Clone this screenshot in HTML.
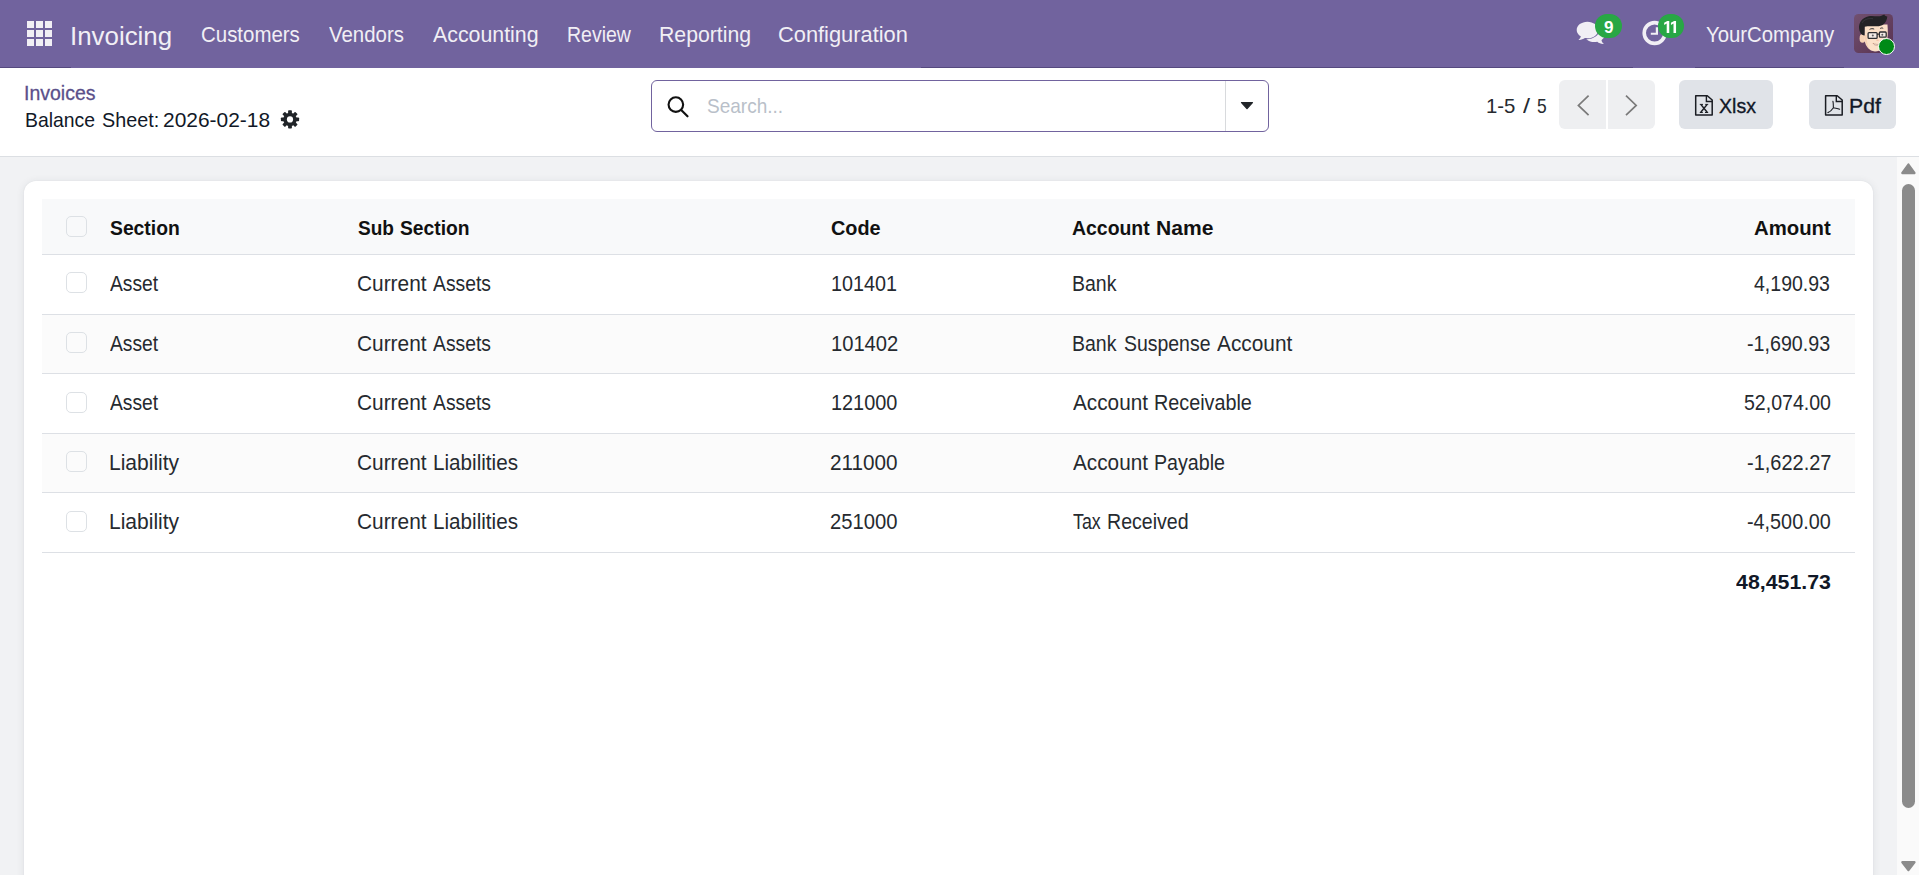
<!DOCTYPE html>
<html lang="en">
<head>
<meta charset="utf-8">
<title>Odoo - Balance Sheet</title>
<style>
html,body{margin:0;padding:0}
html{overflow:hidden}
body{width:1919px;height:875px;overflow:hidden;background:#ffffff}
#root{position:relative;width:1919px;height:875px;overflow:hidden;background:#ffffff;font-family:"Liberation Sans",sans-serif;-webkit-font-smoothing:antialiased}
.a{position:absolute}
.t{position:absolute;white-space:nowrap;transform-origin:0 0}
svg{position:absolute;overflow:visible}
#nav{left:0;top:0;width:1919px;height:68px;background:#71639e}
#navline1{left:0;top:67px;width:71px;height:1px;background:#55497f}
#navline2{left:921px;top:67px;width:712px;height:1px;background:#55497f}
#navline3{left:1695px;top:67px;width:149px;height:1px;background:#55497f}
.sq{position:absolute;width:7.6px;height:7.1px;background:#f1eff5}
.badge{position:absolute;top:13.6px;height:24.3px;border-radius:12.2px;background:#28a745}
#cpline{left:0;top:156px;width:1919px;height:1px;background:#dcdfe3}
#content{left:0;top:157px;width:1897px;height:718px;background:#f1f2f4}
#sbtrack{left:1897px;top:157px;width:22px;height:718px;background:#fafafa}
#sbthumb{left:1902px;top:184px;width:13px;height:624px;border-radius:6.5px;background:#8b8b8b}
#card{left:24px;top:181px;width:1849px;height:740px;background:#ffffff;border-radius:12px;box-shadow:0 1px 9px rgba(30,40,60,.09),0 0 2px rgba(30,40,60,.06)}
#thead{left:42px;top:199px;width:1813px;height:55.5px;background:#f8f9fa}
.hl{position:absolute;left:42px;width:1813px;height:1px;background:#dde0e5}
.stripe{position:absolute;left:42px;width:1813px;background:#fbfbfb}
.cb{position:absolute;left:66.2px;width:18.9px;height:19.1px;border:1px solid #dde1e5;border-radius:5px;background:transparent}
#search{left:651px;top:80px;width:616px;height:50px;border:1px solid #71639e;border-radius:6px;background:#ffffff}
#sdiv{left:1225px;top:81px;width:1px;height:50px;background:#d8dadd}
.pg{position:absolute;top:80px;height:49px;background:#eeeff1}
.btn{position:absolute;top:80px;height:49px;background:#e0e3e8;border-radius:6px}
</style>
</head>
<body>
<div id="root">
<!-- NAVBAR -->
<div class="a" id="nav"></div>
<div class="a" id="navline1"></div>
<div class="a" id="navline2"></div>
<div class="a" id="navline3"></div>
<div class="sq" style="left:26.7px;top:20.9px"></div><div class="sq" style="left:35.8px;top:20.9px"></div><div class="sq" style="left:44.85px;top:20.9px"></div>
<div class="sq" style="left:26.7px;top:29.9px"></div><div class="sq" style="left:35.8px;top:29.9px"></div><div class="sq" style="left:44.85px;top:29.9px"></div>
<div class="sq" style="left:26.7px;top:38.9px"></div><div class="sq" style="left:35.8px;top:38.9px"></div><div class="sq" style="left:44.85px;top:38.9px"></div>

<!-- comments icon -->
<svg style="left:1572px;top:14px" width="40" height="36" viewBox="1572 14 40 36">
 <path fill="#f1eff5" d="M1594.2 25.6 C1599.8 25.6 1604.3 29.1 1604.3 33.4 C1604.7 35.4 1604.5 37 1603.4 38.3 C1602.7 39 1602 39.6 1601.5 40.2 C1601.7 41.6 1602.6 42.9 1604 43.9 C1601.4 44.1 1599 43.4 1597.3 41.8 C1596.3 42 1595.3 42.1 1594.2 42.1 C1588.6 42.1 1584.1 38.2 1584.1 33.9 C1584.1 29.6 1588.6 25.6 1594.2 25.6 Z"/>
 <path fill="#f1eff5" stroke="#71639e" stroke-width="2.1" paint-order="stroke" d="M1587.4 21.8 C1581.5 21.8 1576.7 25.4 1576.7 29.9 C1576.7 32.5 1578.3 34.8 1580.8 36.3 C1580.6 37.7 1579.8 38.9 1578.5 39.9 C1581 40 1583.2 39.4 1584.9 38.1 C1585.7 38.2 1586.5 38.2 1587.4 38.2 C1593.3 38.2 1598.1 34.5 1598.1 29.9 C1598.1 25.4 1593.3 21.8 1587.4 21.8 Z"/>
</svg>
<div class="badge" style="left:1595px;width:27px"></div>
<!-- clock icon -->
<svg style="left:1642px;top:20px" width="26" height="26" viewBox="0 0 26 26">
 <circle cx="12.6" cy="13" r="10.4" fill="none" stroke="#f1eff5" stroke-width="3.6"/>
 <path d="M13.8 7.3 h2.2 v7.5 h-7.2 v-2.1 h5 z" fill="#f1eff5"/>
</svg>
<div class="badge" style="left:1657.5px;width:26.7px"></div>
<svg style="left:1657px;top:13px" width="28" height="26" viewBox="1657 13 28 26"><path fill="#ffffff" d="M1669.25 21 L1667.30 21 L1664.15 22.75 L1664.15 24.9 L1666.70 23.6 L1666.70 32.9 L1669.25 32.9 Z M1676.05 21 L1674.10 21 L1670.95 22.75 L1670.95 24.9 L1673.50 23.6 L1673.50 32.9 L1676.05 32.9 Z"/></svg>

<!-- avatar -->
<svg style="left:1854px;top:14px" width="39" height="39" viewBox="0 0 39 39">
 <defs>
  <linearGradient id="avbg" x1="0" y1="0" x2="1" y2="1"><stop offset="0" stop-color="#71506f"/><stop offset="1" stop-color="#593251"/></linearGradient>
  <clipPath id="avclip"><rect x="0" y="0" width="39" height="39" rx="4.5" ry="4.5"/></clipPath>
 </defs>
 <g clip-path="url(#avclip)">
  <rect x="0" y="0" width="39" height="39" fill="url(#avbg)"/>
  <!-- ear -->
  <ellipse cx="8.5" cy="24.4" rx="2.9" ry="4.4" fill="#f6d2b5"/>
  <!-- face -->
  <path d="M10.4 10.5 L33.5 10.5 C34 17 34 23.5 32.6 28.2 C30.8 33.8 26.2 37.6 20.8 37.4 C15.2 37.1 11.6 32.4 10.4 26 Z" fill="#fbe0c8"/>
  <path d="M10.4 21 C11 27 12 31.5 15.5 35 C13 31 12.6 26 12.6 21 Z" fill="#f3c9aa" opacity=".7"/>
  <!-- hair -->
  <path d="M5.1 14.4 C4.5 9 8 3.6 14.7 2.2 C19 1.4 24 3 27.5 1.7 C28.6 1.2 29.6 .7 30.3 .4 C30.6 1.4 31.6 2.1 33.3 2.4 C33.1 5.6 31.7 8.5 29.6 10.2 C27.6 11.8 25.6 12.2 23 12.3 C18.5 12.5 14 12.1 10.7 12.7 L10.6 21.4 C8.6 21.2 7.2 20.4 6.5 19 C5.6 17.5 5.2 15.9 5.1 14.4 Z" fill="#232326"/>
  <path d="M8 9 C10 5.5 14 4.2 19 4.6" stroke="#3c3c40" stroke-width="1.1" fill="none" opacity=".7"/>
  <!-- glasses -->
  <rect x="14.1" y="18.7" width="9" height="5.6" rx=".9" fill="#f3ebe6" stroke="#2d2d30" stroke-width="1.3"/>
  <rect x="25.4" y="18" width="6.8" height="5.2" rx=".9" fill="#f3ebe6" stroke="#2d2d30" stroke-width="1.3"/>
  <path d="M23.1 20.4 L25.4 20" stroke="#2d2d30" stroke-width="1.2" fill="none"/>
  <circle cx="18.8" cy="21.6" r="1" fill="#5a5a5e"/><circle cx="28.3" cy="20.8" r="1" fill="#5a5a5e"/>
  <!-- brows -->
  <path d="M15.6 15.4 C17 14.5 18.8 14.5 20.2 15.1" stroke="#2d2d30" stroke-width="1" fill="none"/>
  <path d="M26.2 14.5 C27.1 13.8 28.3 13.8 29.2 14.4" stroke="#2d2d30" stroke-width="1" fill="none"/>
  <!-- nose -->
  <ellipse cx="23.6" cy="26.3" rx="1.4" ry=".8" fill="#efb9a0" opacity=".8"/>
  <!-- mouth -->
  <path d="M19 29.3 C21.2 30.4 23.4 30.6 25 30.2 C23.8 31.8 20.8 31.8 19 29.3 Z" fill="#ffffff" stroke="#a8705c" stroke-width=".5"/>
 </g>
</svg>
<div class="a" style="left:1877.8px;top:37.6px;width:15.2px;height:15.2px;border-radius:50%;background:#008a17;border:1.6px solid #ffffff"></div>

<!-- CONTROL PANEL -->
<svg style="left:280px;top:109px" width="20" height="21" viewBox="-10 -10.4 20 21">
 <g fill="#212529">
  <circle r="6.7"/>
  <rect x="-1.9" y="-9.1" width="3.8" height="18.2" rx=".8"/>
  <rect x="-1.9" y="-9.1" width="3.8" height="18.2" rx=".8" transform="rotate(45)"/>
  <rect x="-1.9" y="-9.1" width="3.8" height="18.2" rx=".8" transform="rotate(90)"/>
  <rect x="-1.9" y="-9.1" width="3.8" height="18.2" rx=".8" transform="rotate(135)"/>
 </g>
 <circle r="3.1" fill="#ffffff"/>
</svg>
<div class="a" id="search"></div>
<div class="a" id="sdiv"></div>
<svg style="left:665px;top:94px" width="26" height="26" viewBox="665 94 26 26">
 <circle cx="675.85" cy="104.55" r="7.3" fill="none" stroke="#111111" stroke-width="2.1"/>
 <path d="M681.2 110 L687.5 116.3" stroke="#111111" stroke-width="2.2" stroke-linecap="round" fill="none"/>
</svg>
<svg style="left:1240px;top:101px" width="14" height="9" viewBox="1240 101 14 9">
 <path d="M1241.6 102.6 L1252.4 102.6 L1247 108.6 Z" fill="#212529" stroke="#212529" stroke-width="1.4" stroke-linejoin="round"/>
</svg>
<!-- pager -->
<div class="pg" style="left:1559px;width:47px;border-radius:6px 0 0 6px"></div>
<div class="pg" style="left:1608px;width:47px;border-radius:0 6px 6px 0"></div>
<svg style="left:1559px;top:80px" width="96" height="49" viewBox="1559 80 96 49">
 <path d="M1588.6 95.6 L1578.4 105.4 L1588.6 115.2" fill="none" stroke="#7a7a7a" stroke-width="1.7"/>
 <path d="M1626 95.6 L1636.2 105.4 L1626 115.2" fill="none" stroke="#7a7a7a" stroke-width="1.7"/>
</svg>
<!-- buttons -->
<div class="btn" style="left:1679px;width:94px"></div>
<div class="btn" style="left:1809px;width:87px"></div>
<svg style="left:1690px;top:92px" width="30" height="28" viewBox="1690 92 30 28">
 <path d="M1695.7 95.7 H1707.3 L1712.2 100 V115.1 H1695.7 Z" fill="none" stroke="#1a1d23" stroke-width="1.5" stroke-linejoin="round"/>
 <path d="M1706.4 95.7 V101.5 H1712.2" fill="none" stroke="#1a1d23" stroke-width="1.4"/>
 <path d="M1701 104.6 L1707.2 112.3 M1707 104.6 L1700.8 112.3" stroke="#1a1d23" stroke-width="1.5" fill="none"/>
 <path d="M1699.8 104.4 H1703 M1705.2 104.4 H1708.2 M1699.8 112.5 H1702.8 M1705 112.5 H1708.2" stroke="#1a1d23" stroke-width="1" fill="none"/>
</svg>
<svg style="left:1820px;top:92px" width="30" height="28" viewBox="1820 92 30 28">
 <path d="M1825.6 95.7 H1837.2 L1842.2 100 V115.1 H1825.6 Z" fill="none" stroke="#1a1d23" stroke-width="1.5" stroke-linejoin="round"/>
 <path d="M1836.3 95.7 V101.5 H1842.2" fill="none" stroke="#1a1d23" stroke-width="1.4"/>
 <path d="M1832.9 101.2 C1833.6 104 1833.2 106 1833.4 107.8 C1831.8 110.2 1830 112 1827.9 112.6 M1833.4 107.8 C1835.4 108.4 1837.6 108.2 1839.6 109.2" stroke="#1a1d23" stroke-width="1.1" fill="none" stroke-linecap="round"/>
</svg>

<!-- CONTENT -->
<div class="a" id="cpline"></div>
<div class="a" id="content"></div>
<div class="a" id="sbtrack"></div>
<div class="a" id="sbthumb"></div>
<svg style="left:1899px;top:160px" width="19" height="16" viewBox="1899 160 19 16">
 <path d="M1908.4 164.6 L1914.4 173 L1902.4 173 Z" fill="#8b8b8b" stroke="#8b8b8b" stroke-width="2.4" stroke-linejoin="round"/>
</svg>
<svg style="left:1899px;top:858px" width="19" height="16" viewBox="1899 858 19 16">
 <path d="M1902.4 862.2 L1914.4 862.2 L1908.4 870 Z" fill="#8b8b8b" stroke="#8b8b8b" stroke-width="2.4" stroke-linejoin="round"/>
</svg>
<div class="a" id="card"></div>
<div class="a" id="thead"></div>
<div class="stripe" style="top:314.6px;height:59px"></div>
<div class="stripe" style="top:433.6px;height:59px"></div>
<div class="hl" style="top:254px"></div>
<div class="hl" style="top:314px"></div>
<div class="hl" style="top:373px"></div>
<div class="hl" style="top:433px"></div>
<div class="hl" style="top:492px"></div>
<div class="hl" style="top:552px"></div>
<div class="cb" style="top:216.3px"></div>
<div class="cb" style="top:272.2px"></div>
<div class="cb" style="top:331.9px"></div>
<div class="cb" style="top:391.5px"></div>
<div class="cb" style="top:451.1px"></div>
<div class="cb" style="top:510.7px"></div>

<span class="t" style="left:69.95px;top:23.50px;font-size:25.2px;line-height:25.2px;font-weight:400;color:#f1eff5;transform:scaleX(1.0270);">Invoicing</span>
<span class="t" style="left:201.06px;top:24.40px;font-size:21.8px;line-height:21.8px;font-weight:400;color:#f1eff5;transform:scaleX(0.9380);">Customers</span>
<span class="t" style="left:328.75px;top:24.40px;font-size:21.8px;line-height:21.8px;font-weight:400;color:#f1eff5;transform:scaleX(0.9365);">Vendors</span>
<span class="t" style="left:433.00px;top:24.40px;font-size:21.8px;line-height:21.8px;font-weight:400;color:#f1eff5;transform:scaleX(0.9792);">Accounting</span>
<span class="t" style="left:566.61px;top:24.40px;font-size:21.8px;line-height:21.8px;font-weight:400;color:#f1eff5;transform:scaleX(0.8943);">Review</span>
<span class="t" style="left:659.03px;top:24.40px;font-size:21.8px;line-height:21.8px;font-weight:400;color:#f1eff5;transform:scaleX(0.9742);">Reporting</span>
<span class="t" style="left:778.25px;top:24.40px;font-size:21.8px;line-height:21.8px;font-weight:400;color:#f1eff5;transform:scaleX(1.0017);">Configuration</span>
<span class="t" style="left:1705.90px;top:24.30px;font-size:21.8px;line-height:21.8px;font-weight:400;color:#f1eff5;transform:scaleX(0.9329);">YourCompany</span>
<span class="t" style="left:1604.25px;top:18.90px;font-size:17.2px;line-height:17.2px;font-weight:700;color:#ffffff;transform:scaleX(0.9944);">9</span>
<span class="t" style="left:24.05px;top:83.30px;font-size:20.5px;line-height:20.5px;font-weight:400;color:#5a4f8a;transform:scaleX(0.9506);-webkit-text-stroke:.3px #5a4f8a;">Invoices</span>
<span class="t" style="left:24.78px;top:108.80px;font-size:21px;line-height:21px;font-weight:400;color:#111827;transform:scaleX(0.9231);">Balance</span>
<span class="t" style="left:101.70px;top:108.80px;font-size:21px;line-height:21px;font-weight:400;color:#111827;transform:scaleX(0.9409);">Sheet:</span>
<span class="t" style="left:163.30px;top:108.80px;font-size:21px;line-height:21px;font-weight:400;color:#111827;transform:scaleX(0.9968);">2026-02-18</span>
<span class="t" style="left:706.70px;top:95.40px;font-size:21px;line-height:21px;font-weight:400;color:#b9bfc9;transform:scaleX(0.9050);">Search...</span>
<span class="t" style="left:1486.23px;top:94.90px;font-size:21px;line-height:21px;font-weight:400;color:#262a2f;transform:scaleX(0.9696);">1-5</span>
<span class="t" style="left:1523.00px;top:94.90px;font-size:21px;line-height:21px;font-weight:400;color:#262a2f;transform:scaleX(1.2000);">/</span>
<span class="t" style="left:1537.20px;top:94.90px;font-size:21px;line-height:21px;font-weight:400;color:#262a2f;transform:scaleX(0.8273);">5</span>
<span class="t" style="left:1719.10px;top:94.60px;font-size:21px;line-height:21px;font-weight:400;color:#111827;transform:scaleX(0.9310);-webkit-text-stroke:.35px #111827;">Xlsx</span>
<span class="t" style="left:1848.69px;top:94.60px;font-size:21px;line-height:21px;font-weight:400;color:#111827;transform:scaleX(1.0102);-webkit-text-stroke:.35px #111827;">Pdf</span>
<span class="t" style="left:110.00px;top:217.30px;font-size:21px;line-height:21px;font-weight:700;color:#111111;transform:scaleX(0.9197);">Section</span>
<span class="t" style="left:357.60px;top:217.30px;font-size:21px;line-height:21px;font-weight:700;color:#111111;transform:scaleX(0.9064);">Sub</span>
<span class="t" style="left:400.20px;top:217.30px;font-size:21px;line-height:21px;font-weight:700;color:#111111;transform:scaleX(0.9171);">Section</span>
<span class="t" style="left:830.60px;top:217.30px;font-size:21px;line-height:21px;font-weight:700;color:#111111;transform:scaleX(0.9456);">Code</span>
<span class="t" style="left:1072.30px;top:217.30px;font-size:21px;line-height:21px;font-weight:700;color:#111111;transform:scaleX(0.9249);">Account</span>
<span class="t" style="left:1156.30px;top:217.30px;font-size:21px;line-height:21px;font-weight:700;color:#111111;transform:scaleX(1.0033);">Name</span>
<span class="t" style="left:1754.00px;top:217.30px;font-size:21px;line-height:21px;font-weight:700;color:#111111;transform:scaleX(0.9682);">Amount</span>
<span class="t" style="left:1735.70px;top:570.60px;font-size:21px;line-height:21px;font-weight:700;color:#111827;transform:scaleX(1.0168);">48,451.73</span>
<span class="t" style="left:110.00px;top:274.00px;font-size:21.5px;line-height:21.5px;font-weight:400;color:#262a2f;transform:scaleX(0.8960);">Asset</span>
<span class="t" style="left:356.63px;top:274.00px;font-size:21.5px;line-height:21.5px;font-weight:400;color:#262a2f;transform:scaleX(0.9701);">Current</span>
<span class="t" style="left:432.70px;top:274.00px;font-size:21.5px;line-height:21.5px;font-weight:400;color:#262a2f;transform:scaleX(0.8985);">Assets</span>
<span class="t" style="left:831.08px;top:274.00px;font-size:21.5px;line-height:21.5px;font-weight:400;color:#262a2f;transform:scaleX(0.9200);">101401</span>
<span class="t" style="left:1072.29px;top:274.00px;font-size:21.5px;line-height:21.5px;font-weight:400;color:#262a2f;transform:scaleX(0.9077);">Bank</span>
<span class="t" style="left:1754.00px;top:274.00px;font-size:21.5px;line-height:21.5px;font-weight:400;color:#262a2f;transform:scaleX(0.9076);">4,190.93</span>
<span class="t" style="left:110.00px;top:334.00px;font-size:21.5px;line-height:21.5px;font-weight:400;color:#262a2f;transform:scaleX(0.8960);">Asset</span>
<span class="t" style="left:356.63px;top:334.00px;font-size:21.5px;line-height:21.5px;font-weight:400;color:#262a2f;transform:scaleX(0.9701);">Current</span>
<span class="t" style="left:432.70px;top:334.00px;font-size:21.5px;line-height:21.5px;font-weight:400;color:#262a2f;transform:scaleX(0.8985);">Assets</span>
<span class="t" style="left:831.06px;top:334.00px;font-size:21.5px;line-height:21.5px;font-weight:400;color:#262a2f;transform:scaleX(0.9371);">101402</span>
<span class="t" style="left:1072.19px;top:334.00px;font-size:21.5px;line-height:21.5px;font-weight:400;color:#262a2f;transform:scaleX(0.9077);">Bank</span>
<span class="t" style="left:1123.80px;top:334.00px;font-size:21.5px;line-height:21.5px;font-weight:400;color:#262a2f;transform:scaleX(0.9042);">Suspense</span>
<span class="t" style="left:1216.60px;top:334.00px;font-size:21.5px;line-height:21.5px;font-weight:400;color:#262a2f;transform:scaleX(0.9702);">Account</span>
<span class="t" style="left:1746.80px;top:334.00px;font-size:21.5px;line-height:21.5px;font-weight:400;color:#262a2f;transform:scaleX(0.9154);">-1,690.93</span>
<span class="t" style="left:110.00px;top:393.00px;font-size:21.5px;line-height:21.5px;font-weight:400;color:#262a2f;transform:scaleX(0.8960);">Asset</span>
<span class="t" style="left:356.63px;top:393.00px;font-size:21.5px;line-height:21.5px;font-weight:400;color:#262a2f;transform:scaleX(0.9701);">Current</span>
<span class="t" style="left:432.70px;top:393.00px;font-size:21.5px;line-height:21.5px;font-weight:400;color:#262a2f;transform:scaleX(0.8985);">Assets</span>
<span class="t" style="left:831.08px;top:393.00px;font-size:21.5px;line-height:21.5px;font-weight:400;color:#262a2f;transform:scaleX(0.9239);">121000</span>
<span class="t" style="left:1072.50px;top:393.00px;font-size:21.5px;line-height:21.5px;font-weight:400;color:#262a2f;transform:scaleX(0.9651);">Account</span>
<span class="t" style="left:1154.38px;top:393.00px;font-size:21.5px;line-height:21.5px;font-weight:400;color:#262a2f;transform:scaleX(0.9195);">Receivable</span>
<span class="t" style="left:1743.80px;top:393.00px;font-size:21.5px;line-height:21.5px;font-weight:400;color:#262a2f;transform:scaleX(0.9092);">52,074.00</span>
<span class="t" style="left:109.42px;top:453.00px;font-size:21.5px;line-height:21.5px;font-weight:400;color:#262a2f;transform:scaleX(0.9781);">Liability</span>
<span class="t" style="left:356.63px;top:453.00px;font-size:21.5px;line-height:21.5px;font-weight:400;color:#262a2f;transform:scaleX(0.9701);">Current</span>
<span class="t" style="left:432.84px;top:453.00px;font-size:21.5px;line-height:21.5px;font-weight:400;color:#262a2f;transform:scaleX(0.9609);">Liabilities</span>
<span class="t" style="left:829.84px;top:453.00px;font-size:21.5px;line-height:21.5px;font-weight:400;color:#262a2f;transform:scaleX(0.9626);">211000</span>
<span class="t" style="left:1072.50px;top:453.00px;font-size:21.5px;line-height:21.5px;font-weight:400;color:#262a2f;transform:scaleX(0.9651);">Account</span>
<span class="t" style="left:1154.39px;top:453.00px;font-size:21.5px;line-height:21.5px;font-weight:400;color:#262a2f;transform:scaleX(0.9137);">Payable</span>
<span class="t" style="left:1746.80px;top:453.00px;font-size:21.5px;line-height:21.5px;font-weight:400;color:#262a2f;transform:scaleX(0.9289);">-1,622.27</span>
<span class="t" style="left:109.42px;top:512.00px;font-size:21.5px;line-height:21.5px;font-weight:400;color:#262a2f;transform:scaleX(0.9781);">Liability</span>
<span class="t" style="left:356.63px;top:512.00px;font-size:21.5px;line-height:21.5px;font-weight:400;color:#262a2f;transform:scaleX(0.9701);">Current</span>
<span class="t" style="left:432.84px;top:512.00px;font-size:21.5px;line-height:21.5px;font-weight:400;color:#262a2f;transform:scaleX(0.9609);">Liabilities</span>
<span class="t" style="left:829.86px;top:512.00px;font-size:21.5px;line-height:21.5px;font-weight:400;color:#262a2f;transform:scaleX(0.9409);">251000</span>
<span class="t" style="left:1072.50px;top:512.00px;font-size:21.5px;line-height:21.5px;font-weight:400;color:#262a2f;transform:scaleX(0.8277);">Tax</span>
<span class="t" style="left:1107.19px;top:512.00px;font-size:21.5px;line-height:21.5px;font-weight:400;color:#262a2f;transform:scaleX(0.9102);">Received</span>
<span class="t" style="left:1746.80px;top:512.00px;font-size:21.5px;line-height:21.5px;font-weight:400;color:#262a2f;transform:scaleX(0.9209);">-4,500.00</span>
</div>
</body>
</html>
